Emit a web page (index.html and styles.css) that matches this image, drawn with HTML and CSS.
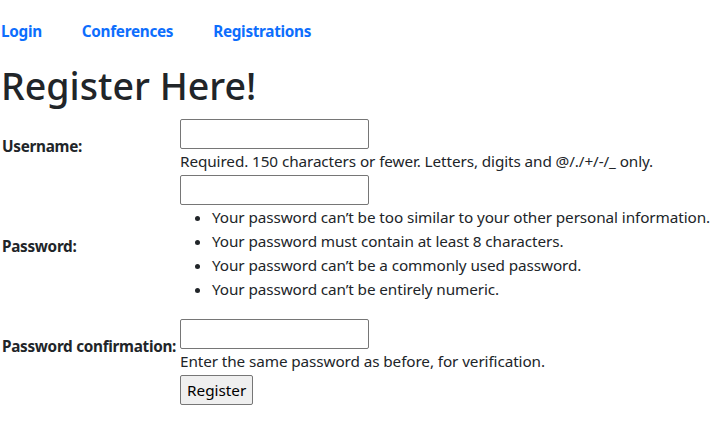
FILE: index.html
```html
<!DOCTYPE html>
<html lang="en">
<head>
<meta charset="utf-8">
<title>Register</title>
<link rel="stylesheet" href="styles.css">
</head>
<body>
<nav class="topnav">
  <a href="#" class="nav-link">Login</a>
  <a href="#" class="nav-link">Conferences</a>
  <a href="#" class="nav-link">Registrations</a>
</nav>
<h1 class="title">Register Here!</h1>
<form class="reg-form">
  <table class="form-table">
    <tr>
      <th><label for="id_username">Username:</label></th>
      <td><input type="text" id="id_username" class="field"><br><span class="helptext">Required. 150 characters or fewer. Letters, digits and @/./+/-/_ only.</span></td>
    </tr>
    <tr>
      <th><label for="id_password1">Password:</label></th>
      <td><input type="password" id="id_password1" class="field"><br><span class="helptext"><ul class="rules"><li>Your password can’t be too similar to your other personal information.</li><li>Your password must contain at least 8 characters.</li><li>Your password can’t be a commonly used password.</li><li>Your password can’t be entirely numeric.</li></ul></span></td>
    </tr>
    <tr>
      <th><label for="id_password2">Password confirmation:</label></th>
      <td><input type="password" id="id_password2" class="field"><br><span class="helptext">Enter the same password as before, for verification.</span></td>
    </tr>
  </table>
  <div class="actions"><button type="submit" class="btn">Register</button></div>
</form>
</body>
</html>
```
FILE: styles.css
```css
html, body {
  margin: 0;
  padding: 0;
  background: #fff;
}
body {
  font-family: "Noto Sans", "Open Sans", sans-serif;
  font-size: 15.3px;
  line-height: 24px;
  letter-spacing: -0.1px;
  color: #212529;
}
.topnav {
  display: flex;
  gap: 40px;
  padding: 19px 0 19px 1px;
}
.nav-link {
  color: #0d6efd;
  font-weight: 700;
  text-decoration: none;
  letter-spacing: -0.3px;
}
.title {
  margin: 0 0 8px;
  padding-left: 1px;
  font-size: 37.6px;
  line-height: 48px;
  font-weight: 500;
  letter-spacing: 0;
  color: #212529;
}
.reg-form {
  margin: 0;
}
.form-table {
  border-collapse: collapse;
}
.form-table th,
.form-table td {
  padding: 1px;
}
.form-table th {
  text-align: left;
  vertical-align: middle;
  white-space: nowrap;
  width: 177px;
  padding-left: 2px;
  padding-right: 0;
  letter-spacing: -0.3px;
}
.form-table td {
  vertical-align: top;
}
.field {
  box-sizing: border-box;
  width: 189px;
  height: 30px;
  margin: 0;
  padding: 1px 2px;
  border: 1px solid #767676;
  border-radius: 2px;
  font: inherit;
  background: #fff;
  vertical-align: top;
}
.helptext {
  display: inline;
}
.rules {
  margin: 0 0 16px;
  padding-left: 32px;
}
.actions {
  padding: 1px 0 0 180px;
}
.btn {
  box-sizing: border-box;
  height: 30px;
  width: 73px;
  margin: 0;
  padding: 1px 6px;
  font: inherit;
  color: #000;
  background: #efefef;
  border: 1px solid #767676;
  border-radius: 2px;
}
```
